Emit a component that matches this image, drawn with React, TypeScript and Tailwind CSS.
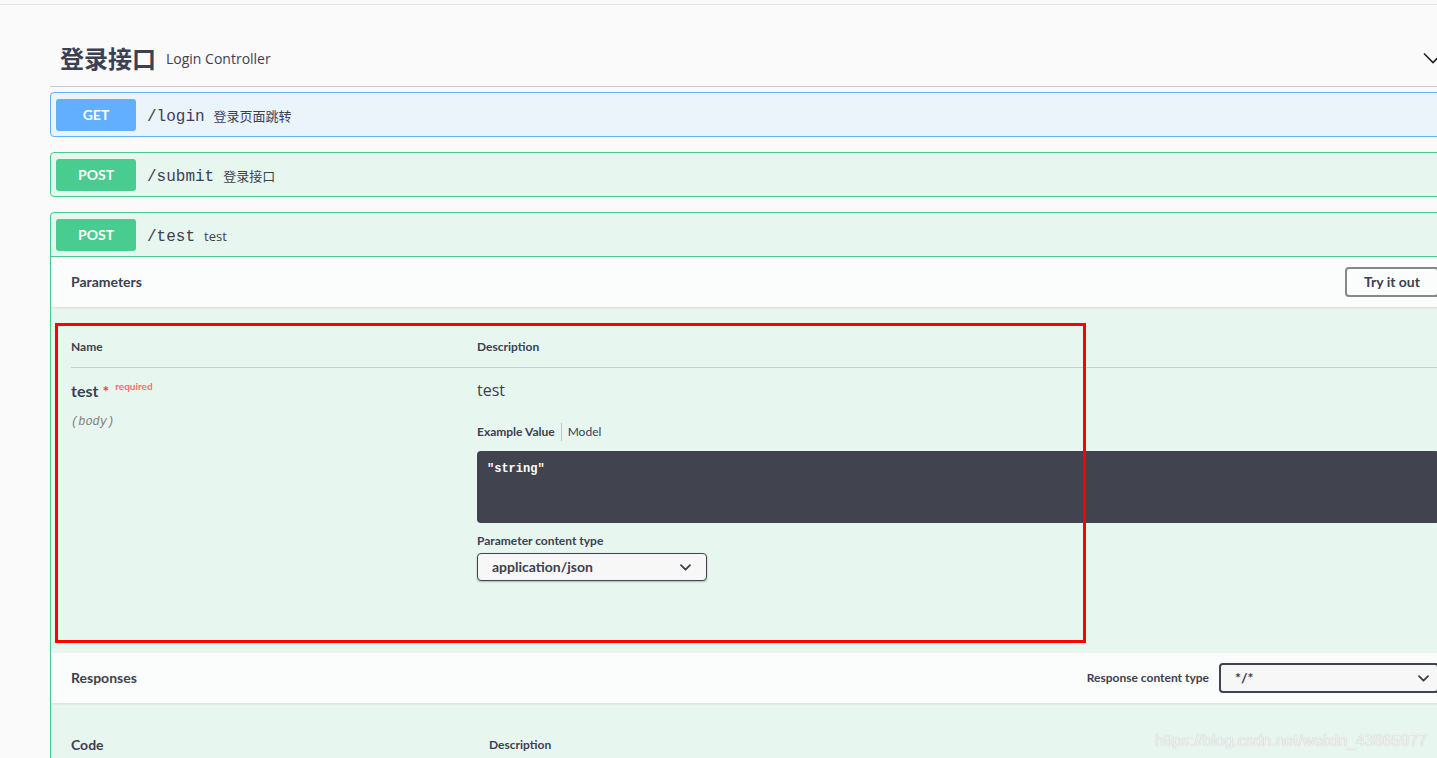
const sans = "font-['Lato','Open_Sans','Noto_Sans_CJK_SC',sans-serif]"
const mono = "font-['Liberation_Mono','DejaVu_Sans_Mono',monospace]"

interface OpBlockProps {
  method: string
  path: string
  summary: string
  kind: "get" | "post"
}

function SelectArrow() {
  return (
    <svg width="11" height="7" viewBox="0 0 11 7" fill="none">
      <path d="M1 1.2 5.5 5.7 10 1.2" stroke="#3b4151" strokeWidth="1.8" strokeLinecap="round" strokeLinejoin="round" />
    </svg>
  )
}

function OpHeader({ method, path, summary, kind }: OpBlockProps) {
  return (
    <div className="flex h-[43px] items-center px-[5px]">
      <span
        className={`flex h-8 w-20 items-center justify-center rounded-[3px] text-sm font-bold text-white ${sans} ${
          kind === "get" ? "bg-[#61affe]" : "bg-[#49cc90]"
        }`}
      >
        {method}
      </span>
      <span className={`ml-[11px] pt-[5px] text-base text-[#3b4151] ${mono}`}>{path}</span>
      <span className="ml-[9px] pt-[4px] text-[13px] text-[#3b4151] font-['Open_Sans','Noto_Sans_CJK_SC',sans-serif]">
        {summary}
      </span>
    </div>
  )
}

export default function App() {
  return (
    <div className="relative min-h-screen w-full overflow-hidden bg-[#fafafa] text-[#3b4151]">
      <div className="h-[5px] border-b border-[#e3e3e3]" />

      <div className="ml-[50px] w-[1410px]">
        {/* 标签标题 */}
        <div className="flex h-[82px] items-center justify-between border-b border-[#c7c9cd] pl-[10px] pt-[25px]">
          <div className="flex items-center">
            <h2 className="text-[24px] font-bold text-[#3b4151] font-['Noto_Sans_CJK_SC',sans-serif]">登录接口</h2>
            <span className="ml-[10px] pt-[2px] text-sm text-[#3b4151] font-['Open_Sans',sans-serif]">Login Controller</span>
          </div>
          <svg className="mr-[17px]" width="20" height="12" viewBox="0 0 20 12" fill="none">
            <path d="M1 1.5 10 10.5l9-9" stroke="#222" strokeWidth="1.6" />
          </svg>
        </div>

        {/* GET /login */}
        <div className="mt-[5px] rounded border border-[#61affe] bg-[#ebf3fb]">
          <OpHeader method="GET" path="/login" summary="登录页面跳转" kind="get" />
        </div>

        {/* POST /submit */}
        <div className="mt-[15px] rounded border border-[#49cc90] bg-[#e8f6f0]">
          <OpHeader method="POST" path="/submit" summary="登录接口" kind="post" />
        </div>

        {/* POST /test 展开 */}
        <div className="mt-[15px] rounded border border-[#49cc90] bg-[#e8f6f0]">
          <div className="border-b border-[#49cc90]">
            <OpHeader method="POST" path="/test" summary="test" kind="post" />
          </div>

          {/* Parameters */}
          <div className={`flex h-[50px] items-center justify-between bg-white/80 px-5 shadow-[0_1px_2px_rgba(0,0,0,0.1)] ${sans}`}>
            <h4 className="text-sm font-bold">Parameters</h4>
            <button className="h-[30px] w-[94px] rounded border-2 border-[#888] text-sm font-bold text-[#3b4151]">
              Try it out
            </button>
          </div>

          <div className={`h-[346px] px-5 pt-[19px] ${sans}`}>
            <div className="flex h-[42px] items-center border-b border-[#c6cfd3] text-xs font-bold">
              <div className="w-[406px]">Name</div>
              <div>Description</div>
            </div>
            <div className="flex">
              <div className="w-[406px] pt-[11px]">
                <div className="flex items-start leading-5">
                  <span className="text-base font-bold">test</span>
                  <span className="ml-[4px] text-base font-bold text-[#f93e3e]">*</span>
                  <span className="ml-[6px] -mt-[3px] text-[10px] font-bold text-[#fd6b6b]">required</span>
                </div>
                <div className={`mt-[11px] text-xs italic leading-4 text-[#808080] ${mono}`}>(body)</div>
              </div>
              <div className="flex-1 pt-[12px]">
                <div className="text-base leading-5 font-['Open_Sans',sans-serif]">test</div>
                <div className="mt-[23px] flex items-center text-xs leading-4">
                  <span className="font-bold">Example Value</span>
                  <span className="mx-[6px] h-[18px] border-l border-[#c1c4c9]" />
                  <span>Model</span>
                </div>
                <div className={`mt-[10px] h-[72px] rounded bg-[#41444e] px-[10px] pt-[10px] text-xs font-bold leading-4 text-white ${mono}`}>
                  "string"
                </div>
                <div className="mt-[10px] text-xs font-bold leading-4">Parameter content type</div>
                <div className="mt-[4px] flex h-[28px] w-[230px] items-center justify-between rounded border border-[#41444e] bg-[#f7f7f7] pl-[14px] pr-[15px] text-sm font-bold shadow-[0_1px_2px_rgba(0,0,0,0.25)]">
                  <span>application/json</span>
                  <SelectArrow />
                </div>
              </div>
            </div>
          </div>

          {/* Responses */}
          <div className={`flex h-[50px] items-center justify-between bg-white/80 px-5 shadow-[0_1px_2px_rgba(0,0,0,0.1)] ${sans}`}>
            <h4 className="text-sm font-bold">Responses</h4>
            <div className="flex items-center">
              <span className="mr-[10px] text-xs font-bold">Response content type</span>
              <div className="flex h-[30px] w-[220px] items-center justify-between rounded border-2 border-[#41444e] bg-[#f7f7f7] pl-[14px] pr-[8px] text-sm font-bold">
                <span>*/*</span>
                <SelectArrow />
              </div>
            </div>
          </div>

          <div className={`flex h-[120px] px-5 pt-[32px] ${sans}`}>
            <div className="w-[418px] text-sm font-bold leading-5">Code</div>
            <div className="pt-[2px] text-xs font-bold leading-4">Description</div>
          </div>
        </div>
      </div>

      {/* 标注框 */}
      <div className="pointer-events-none absolute left-[55px] top-[323px] h-[320px] w-[1031px] border-[3px] border-[#ff0000]" />

      {/* 水印 */}
      <div className="pointer-events-none absolute left-[1155px] top-[729px] text-[16px] text-[#f2f2f2] font-['Liberation_Sans',sans-serif] [text-shadow:0_0_1px_#b5b5b5]">
        https://blog.csdn.net/weixin_43865977
      </div>
    </div>
  )
}
